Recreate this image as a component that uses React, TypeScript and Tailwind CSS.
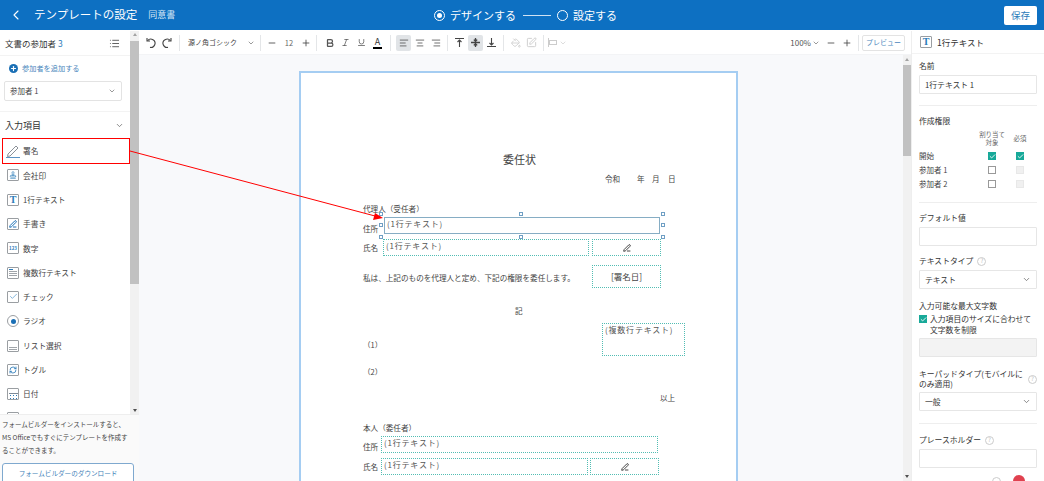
import React from 'react';
import { ChevronDown, ChevronLeft, List, Minus, Plus, Bold, Italic, Underline, AlignLeft, AlignCenter, AlignRight, Check, PaintBucket, SquarePen, PenLine, Stamp, RefreshCw } from 'lucide-react';

const font = "font-['Noto_Sans_CJK_JP','Noto_Sans',sans-serif]";

const BoxIcon = ({ children, round }: { children?: React.ReactNode; round?: boolean }) => (
  <span className={`flex h-[12px] w-[12px] items-center justify-center border border-[#9a9ea2] bg-white ${round ? 'rounded-full' : 'rounded-[1px]'}`}>
    {children}
  </span>
);

const TIcon = () => <BoxIcon><span className="font-['Liberation_Serif',serif] text-[10px] font-bold leading-none text-[#2b7bb9]">T</span></BoxIcon>;

const SignIcon = () => (
  <svg width="16" height="15" viewBox="0 0 16 15" fill="none">
    <path d="M3 10 L11 2 L13 4 L5 12 L2.5 12.5 Z" stroke="#8b9198" strokeWidth="1" strokeLinejoin="round" />
    <path d="M1 13.5 H15" stroke="#5b93c4" strokeWidth="1" />
  </svg>
);

const items: { label: string; icon: React.ReactNode }[] = [
  { label: '署名', icon: <SignIcon /> },
  { label: '会社印', icon: <BoxIcon><Stamp className="h-[8px] w-[8px] text-[#2b7bb9]" strokeWidth={2} /></BoxIcon> },
  { label: '1行テキスト', icon: <TIcon /> },
  { label: '手書き', icon: <BoxIcon><PenLine className="h-[8px] w-[8px] text-[#1a6fb5]" strokeWidth={3} /></BoxIcon> },
  { label: '数字', icon: <BoxIcon><span className="text-[4.5px] font-bold leading-none text-[#2b7bb9]">123</span></BoxIcon> },
  { label: '複数行テキスト', icon: <BoxIcon><span className="flex h-full w-full flex-col justify-center gap-[1px] px-[1px]"><span className="h-[1px] w-[4px] bg-[#2b7bb9]" /><span className="h-[1px] bg-[#a0a5aa]" /><span className="h-[1px] bg-[#a0a5aa]" /><span className="h-[1px] bg-[#a0a5aa]" /></span></BoxIcon> },
  { label: 'チェック', icon: <BoxIcon><Check className="h-[9px] w-[9px] text-[#4b93cc]" strokeWidth={1.8} /></BoxIcon> },
  { label: 'ラジオ', icon: <BoxIcon round><span className="h-[5px] w-[5px] rounded-full bg-[#1a6fb5]" /></BoxIcon> },
  { label: 'リスト選択', icon: <BoxIcon><span className="flex h-full w-full flex-col justify-end gap-[1px] p-[1px]"><span className="h-[1px] bg-[#a0a5aa]" /><span className="h-[1px] bg-[#a0a5aa]" /></span></BoxIcon> },
  { label: 'トグル', icon: <BoxIcon><RefreshCw className="h-[8px] w-[8px] text-[#2b7bb9]" strokeWidth={2.5} /></BoxIcon> },
  { label: '日付', icon: <BoxIcon><span className="mt-[3px] h-[6px] w-[9px] border-t border-[#7d8b98] bg-[radial-gradient(#2b7bb9_0.6px,transparent_0.7px)] bg-[length:3px_3px]" /></BoxIcon> },
  { label: '', icon: <BoxIcon /> },
];

const Sep = ({ narrow }: { narrow?: boolean }) => <span className={`h-[16px] w-px bg-[#e4e6e8] ${narrow ? 'mx-[4px]' : 'mx-[5px]'}`} />;

const ToolBtn = ({ children, active }: { children: React.ReactNode; active?: boolean }) => (
  <span className={`flex h-[16px] w-[15px] items-center justify-center rounded-[2px] text-[#555] ${active ? 'bg-[#e1e4e7]' : ''}`}>{children}</span>
);

const UndoIcon = ({ flip }: { flip?: boolean }) => (
  <svg width="12" height="12" viewBox="0 0 12 12" fill="none" stroke="#444" strokeWidth="1.1" className={flip ? '-scale-x-100' : ''}>
    <path d="M2.6 3.6 A4.2 4.2 0 1 1 5 10.4" />
    <path d="M2 1 V4 H5" />
  </svg>
);

const VAlignIcon = ({ pos }: { pos: 'top' | 'middle' | 'bottom' }) => (
  <svg width="11" height="11" viewBox="0 0 11 11" fill="none" stroke="#444" strokeWidth="1.1">
    {pos === 'top' && <path d="M1 1.5 H10 M5.5 3 V10 M3.5 5 L5.5 3 L7.5 5" />}
    {pos === 'middle' && <path d="M1 5.5 H10 M5.5 1 V4 M5.5 7 V10 M3.8 2.6 L5.5 4.3 L7.2 2.6 M3.8 8.4 L5.5 6.7 L7.2 8.4" strokeWidth="1.3" />}
    {pos === 'bottom' && <path d="M1 9.5 H10 M5.5 1 V8 M3.5 6 L5.5 8 L7.5 6" />}
  </svg>
);

const ScrollArrow = ({ down }: { down?: boolean }) => (
  <span className={`mx-auto block h-0 w-0 border-x-[2.5px] border-x-transparent ${down ? 'border-t-[3px] border-t-[#505050]' : 'border-b-[3px] border-b-[#a3a3a3]'}`} />
);

const Label = ({ children, help }: { children: React.ReactNode; help?: boolean }) => (
  <div className="flex items-center gap-[4px] text-[7.8px] leading-[12px] text-[#333]">
    {children}
    {help && <span className="flex h-[9px] w-[9px] items-center justify-center rounded-full border border-[#ccc] text-[6px] leading-none text-[#bbb]">?</span>}
  </div>
);

const Input = ({ children, select, disabled }: { children?: React.ReactNode; select?: boolean; disabled?: boolean }) => (
  <div className={`mt-[3px] flex h-[19px] items-center justify-between rounded-[1px] border border-[#e6e6e6] px-[5px] text-[7.8px] text-[#333] ${disabled ? 'bg-[#f3f3f3]' : 'bg-white'}`}>
    <span>{children}</span>
    {select && <ChevronDown className="h-[9px] w-[9px] text-[#666]" />}
  </div>
);

const Tick = () => (
  <span className="flex h-[8px] w-[8px] items-center justify-center bg-[#18a999]">
    <Check className="h-[7px] w-[7px] text-white" strokeWidth={3} />
  </span>
);
const Empty = ({ off }: { off?: boolean }) => (
  <span className={`h-[8px] w-[8px] border ${off ? 'border-[#e8e8e8] bg-[#f0f0f0]' : 'border-[#999] bg-white'}`} />
);

const Handle = ({ className }: { className: string }) => (
  <span className={`absolute h-[4px] w-[4px] border border-[#6f9fc4] bg-white ${className}`} />
);

const fieldText = 'pl-[2px] text-[8px] leading-[12px] tracking-[0.8px] text-[#555]';
const dotted = 'absolute border border-dotted border-[#52bdb3]';
const docText = 'absolute whitespace-nowrap text-[7.6px] leading-[12px] text-[#444]';

const Pen = () => <PenLine className="h-[8px] w-[8px] text-[#222]" strokeWidth={2.5} />;

export default function App() {
  return (
    <div className={`relative flex h-[481px] w-[1044px] flex-col overflow-hidden bg-white ${font}`}>
      {/* Header */}
      <header className="relative flex h-[30px] shrink-0 items-center bg-[#0d70c2] text-white">
        <ChevronLeft className="ml-[8px] h-[16px] w-[16px]" strokeWidth={1.6} />
        <h1 className="ml-[10px] text-[11.5px] leading-none">テンプレートの設定</h1>
        <span className="ml-[11px] text-[9px] text-[#d5e6f5]">同意書</span>
        <div className="absolute left-[434px] flex items-center text-[11px]">
          <span className="flex h-[11px] w-[11px] items-center justify-center rounded-full border border-white"><span className="h-[5px] w-[5px] rounded-full bg-white" /></span>
          <span className="ml-[5px]">デザインする</span>
          <span className="ml-[7px] h-px w-[28px] bg-[#cfe2f3]" />
          <span className="ml-[6px] h-[11px] w-[11px] rounded-full border border-white" />
          <span className="ml-[5px]">設定する</span>
        </div>
        <button className="ml-auto mr-[7px] h-[19px] w-[33px] rounded-[2px] bg-white text-[9.5px] text-[#2b7bb9]">保存</button>
      </header>

      <div className="flex min-h-0 flex-1 bg-white pt-px">
        {/* Left panel */}
        <aside className="flex w-[139px] shrink-0 flex-col">
          <div className="flex min-h-0 flex-1">
            <div className="w-[130px] shrink-0 overflow-hidden">
              <div className="flex h-[24px] items-center justify-between pl-[5px] pr-[10px] text-[8.5px] text-[#333]">
                <span>文書の参加者 <span className="text-[#2b7bb9]">3</span></span>
                <List className="h-[11px] w-[11px] text-[#555]" />
              </div>
              <div className="border-y border-[#f3f3f3] px-[4px] pb-[10px] pt-[4px]">
                <div className="flex h-[16px] items-center pl-[5px] text-[7.2px] text-[#4b87bd]">
                  <span className="flex h-[9px] w-[9px] items-center justify-center rounded-full bg-[#1a6fb5]"><Plus className="h-[7px] w-[7px] text-white" strokeWidth={4} /></span>
                  <span className="ml-[4px]">参加者を追加する</span>
                </div>
                <div className="mt-[5px] flex h-[20px] w-[118px] items-center justify-between rounded-[2px] border border-[#e3e3e3] px-[5px] text-[7.5px] text-[#444]">
                  参加者 1 <ChevronDown className="h-[8px] w-[8px] text-[#666]" />
                </div>
              </div>
              <div className="flex h-[27px] items-center justify-between pl-[5px] pr-[6px] text-[9px] text-[#333]">
                入力項目 <ChevronDown className="h-[9px] w-[9px] text-[#666]" />
              </div>
              <ul>
                {items.map(item => (
                  <li key={item.label} className="flex h-[24.3px] items-center pl-[5px] text-[7.7px] text-[#444]">
                    <span className="flex w-[16px] justify-center">{item.icon}</span>
                    <span className="ml-[2px]">{item.label}</span>
                  </li>
                ))}
              </ul>
            </div>
            <div className="flex w-[9px] shrink-0 flex-col bg-[#f1f1f1] py-[2px]">
              <ScrollArrow />
              <span className="mt-[5px] h-[243px] bg-[#c1c1c1]" />
              <span className="mt-auto"><ScrollArrow down /></span>
            </div>
          </div>
          <div className="h-[67px] shrink-0 border-t border-[#eee] bg-[#fafafa] pl-[2px] pr-[2px] pt-[3px]">
            <p className="whitespace-nowrap text-[6.5px] leading-[13px] text-[#444]">フォームビルダーをインストールすると、<br />MS Officeでもすぐにテンプレートを作成す<br />ることができます。</p>
            <button className="mt-[3px] h-[26px] w-[132px] rounded-[3px] border border-[#7fa9cf] bg-white pb-[5px] text-[6.6px] text-[#3f7fb8]">フォームビルダーのダウンロード</button>
          </div>
        </aside>

        {/* Centre */}
        <main className="flex min-w-0 flex-1 flex-col">
          <div className="flex h-[23px] shrink-0 items-center pl-[4px] pr-[6px]">
            <ToolBtn><UndoIcon /></ToolBtn>
            <span className="w-px" />
            <ToolBtn><UndoIcon flip /></ToolBtn>
            <Sep />
            <span className="ml-[3px] w-[50px] whitespace-nowrap text-[7px] text-[#444]">源ノ角ゴシック</span>
            <ChevronDown className="ml-[9px] h-[8px] w-[8px] text-[#666]" />
            <Sep />
            <Minus className="ml-[1px] h-[10px] w-[10px] text-[#444]" />
            <span className="w-[24px] text-center text-[7.5px] text-[#666]">12</span>
            <Plus className="h-[10px] w-[10px] text-[#444]" />
            <Sep />
            <ToolBtn><Bold className="h-[10px] w-[10px]" strokeWidth={3} /></ToolBtn>
            <span className="w-px" />
            <ToolBtn><Italic className="h-[9px] w-[9px]" /></ToolBtn>
            <span className="w-px" />
            <ToolBtn><Underline className="h-[9px] w-[9px]" /></ToolBtn>
            <span className="w-px" />
            <ToolBtn><span className="border-b-2 border-black px-[2px] text-[9px] leading-[11px] text-[#333]">A</span></ToolBtn>
            <Sep />
            <ToolBtn active><AlignLeft className="h-[10px] w-[10px]" /></ToolBtn>
            <span className="w-px" />
            <ToolBtn><AlignCenter className="h-[10px] w-[10px]" /></ToolBtn>
            <span className="w-px" />
            <ToolBtn><AlignRight className="h-[10px] w-[10px]" /></ToolBtn>
            <Sep narrow />
            <ToolBtn><VAlignIcon pos="top" /></ToolBtn>
            <span className="w-px" />
            <ToolBtn active><VAlignIcon pos="middle" /></ToolBtn>
            <span className="w-px" />
            <ToolBtn><VAlignIcon pos="bottom" /></ToolBtn>
            <Sep narrow />
            <span className="flex h-[16px] w-[15px] items-center justify-center text-[#ccc]"><PaintBucket className="h-[10px] w-[10px]" /></span>
            <span className="w-px" />
            <span className="flex h-[16px] w-[15px] items-center justify-center text-[#ccc]"><SquarePen className="h-[11px] w-[11px]" /></span>
            <Sep narrow />
            <span className="flex items-center">
              <span className="h-[9px] w-px bg-[#ccc]" />
              <span className="h-[5px] w-[8px] border border-[#ccc]" />
            </span>
            <ChevronDown className="ml-[2px] h-[8px] w-[8px] text-[#ccc]" />
            <div className="ml-auto flex items-center">
              <span className="text-[8px] text-[#555]">100%</span>
              <ChevronDown className="ml-[1px] h-[8px] w-[8px] text-[#666]" />
              <Minus className="ml-[6px] h-[10px] w-[10px] text-[#444]" />
              <Plus className="ml-[6px] h-[10px] w-[10px] text-[#444]" />
              <span className="ml-[6px] h-[16px] w-px bg-[#e4e6e8]" />
              <button className="ml-[3px] h-[16px] w-[43px] rounded-[2px] border border-[#e3e3e3] text-[7px] text-[#4b87bd]">プレビュー</button>
            </div>
          </div>

          <div className="flex min-h-0 flex-1 border-t border-[#f3f4f6] bg-[#f8f9fb]">
            <div className="min-w-0 flex-1 overflow-hidden pl-[160px] pt-[16px]">
              <div className="relative h-[500px] w-[439px] border-2 border-[#a5cdf2] bg-white">
                <span className="absolute left-[202px] top-[78px] whitespace-nowrap text-[11px] leading-[16px] text-[#444]">委任状</span>
                <span className={`${docText} left-[304px] top-[100px]`}>令和</span>
                <span className={`${docText} left-[336px] top-[100px]`}>年</span>
                <span className={`${docText} left-[351px] top-[100px]`}>月</span>
                <span className={`${docText} left-[367px] top-[100px]`}>日</span>
                <span className={`${docText} left-[62px] top-[130px]`}>代理人（受任者）</span>
                <span className={`${docText} left-[62px] top-[150px]`}>住所</span>
                <span className={`${docText} left-[62px] top-[169px]`}>氏名</span>

                <div className={`absolute left-[83px] top-[144px] h-[17px] w-[276px] border border-[#86adc4] ${fieldText}`}>(1行テキスト)</div>
                <Handle className="left-[78px] top-[139px]" />
                <Handle className="left-[218px] top-[139px]" />
                <Handle className="left-[360px] top-[139px]" />
                <Handle className="left-[78px] top-[150px]" />
                <Handle className="left-[360px] top-[150px]" />
                <Handle className="left-[78px] top-[162px]" />
                <Handle className="left-[218px] top-[162px]" />
                <Handle className="left-[360px] top-[162px]" />

                <div className={`${dotted} left-[82px] top-[166px] h-[17px] w-[206px] ${fieldText}`}>(1行テキスト)</div>
                <div className={`${dotted} left-[291px] top-[166px] flex h-[17px] w-[69px] items-center justify-center`}><Pen /></div>
                <span className={`${docText} left-[62px] top-[199px]`}>私は、上記のものを代理人と定め、下記の権限を委任します。</span>
                <div className={`${dotted} left-[291px] top-[192px] flex h-[23px] w-[69px] items-center justify-center text-[8.5px] text-[#444]`}>[署名日]</div>
                <span className={`${docText} left-[214px] top-[232px]`}>記</span>
                <div className={`${dotted} left-[301px] top-[250px] h-[33px] w-[83px] ${fieldText}`}>(複数行テキスト)</div>
                <span className={`${docText} left-[62px] top-[266px]`}>（1）</span>
                <span className={`${docText} left-[62px] top-[293px]`}>（2）</span>
                <span className={`${docText} left-[359px] top-[319px]`}>以上</span>
                <span className={`${docText} left-[62px] top-[349px]`}>本人（委任者）</span>
                <span className={`${docText} left-[62px] top-[368px]`}>住所</span>
                <span className={`${docText} left-[62px] top-[388px]`}>氏名</span>
                <div className={`${dotted} left-[80px] top-[363px] h-[17px] w-[277px] ${fieldText}`}>(1行テキスト)</div>
                <div className={`${dotted} left-[80px] top-[385px] h-[17px] w-[207px] ${fieldText}`}>(1行テキスト)</div>
                <div className={`${dotted} left-[289px] top-[385px] flex h-[17px] w-[69px] items-center justify-center`}><Pen /></div>
              </div>
            </div>
            <div className="flex w-[8px] shrink-0 flex-col bg-[#f1f1f1] py-[3px]">
              <ScrollArrow />
              <span className="mt-[4px] h-[91px] bg-[#c1c1c1]" />
              <span className="mt-auto"><ScrollArrow down /></span>
            </div>
          </div>
        </main>

        {/* Right panel */}
        <aside className="w-[133px] shrink-0 overflow-hidden border-l border-[#eee]">
          <div className="flex h-[22px] items-center gap-[5px] pl-[8px] text-[8.5px] text-[#333]"><TIcon />1行テキスト</div>
          <div className="border-t border-[#f3f3f3] pl-[7px] pr-[7px] pt-[6px]">
            <Label>名前</Label>
            <Input>1行テキスト 1</Input>
            <div className="mt-[11px] border-t border-[#eee]" />
            <div className="mt-[9px]"><Label>作成権限</Label></div>
            <div className="mt-[4px] grid grid-cols-[1fr_28px_28px] items-center pr-[3px] text-[7.5px] leading-[14px] text-[#444]">
              <span />
              <span className="mb-[2px] text-center text-[6.4px] leading-[8px] text-[#666]">割り当て<br />対象</span>
              <span className="mb-[2px] text-center text-[6.4px] text-[#666]">必須</span>
              <span>開始</span><span className="flex justify-center"><Tick /></span><span className="flex justify-center"><Tick /></span>
              <span>参加者 1</span><span className="flex justify-center"><Empty /></span><span className="flex justify-center"><Empty off /></span>
              <span>参加者 2</span><span className="flex justify-center"><Empty /></span><span className="flex justify-center"><Empty off /></span>
            </div>
            <div className="mt-[11px] border-t border-[#eee]" />
            <div className="mt-[9px]"><Label>デフォルト値</Label></div>
            <Input />
            <div className="mt-[9px]"><Label help>テキストタイプ</Label></div>
            <Input select>テキスト</Input>
            <div className="mt-[11px]"><Label>入力可能な最大文字数</Label></div>
            <div className="mt-[1px] flex gap-[3px] text-[7.8px] leading-[11px] text-[#333]">
              <span className="mt-[2px] shrink-0"><Tick /></span>
              <span>入力項目のサイズに合わせて文字数を制限</span>
            </div>
            <div className="mt-[1px]"><Input disabled /></div>
            <div className="mt-[12px] flex items-center justify-between text-[7.8px] leading-[10px] text-[#333]">
              <span className="w-[106px]">キーパッドタイプ(モバイルにのみ適用)</span>
              <span className="flex h-[9px] w-[9px] items-center justify-center rounded-full border border-[#ccc] text-[6px] leading-none text-[#bbb]">?</span>
            </div>
            <Input select>一般</Input>
            <div className="mt-[12px] border-t border-[#eee]" />
            <div className="mt-[10px]"><Label help>プレースホルダー</Label></div>
            <Input />
            <div className="mt-[7px] flex items-center justify-end gap-[12px] pr-[12px]">
              <span className="h-[9px] w-[9px] rounded-full border border-[#ccc]" />
              <span className="h-[12px] w-[12px] rounded-full bg-[#e0414f]" />
            </div>
          </div>
        </aside>
      </div>

      {/* Annotation over the page */}
      <div className="pointer-events-none absolute left-[2px] top-[138px] h-[26px] w-[128px] border border-[#f00]" />
      <svg className="pointer-events-none absolute left-0 top-0" width="1044" height="481">
        <line x1="130" y1="151" x2="375" y2="216" stroke="#f00" strokeWidth="1" />
        <polygon points="383,218 373,220 375,213" fill="#f00" />
      </svg>
    </div>
  );
}
